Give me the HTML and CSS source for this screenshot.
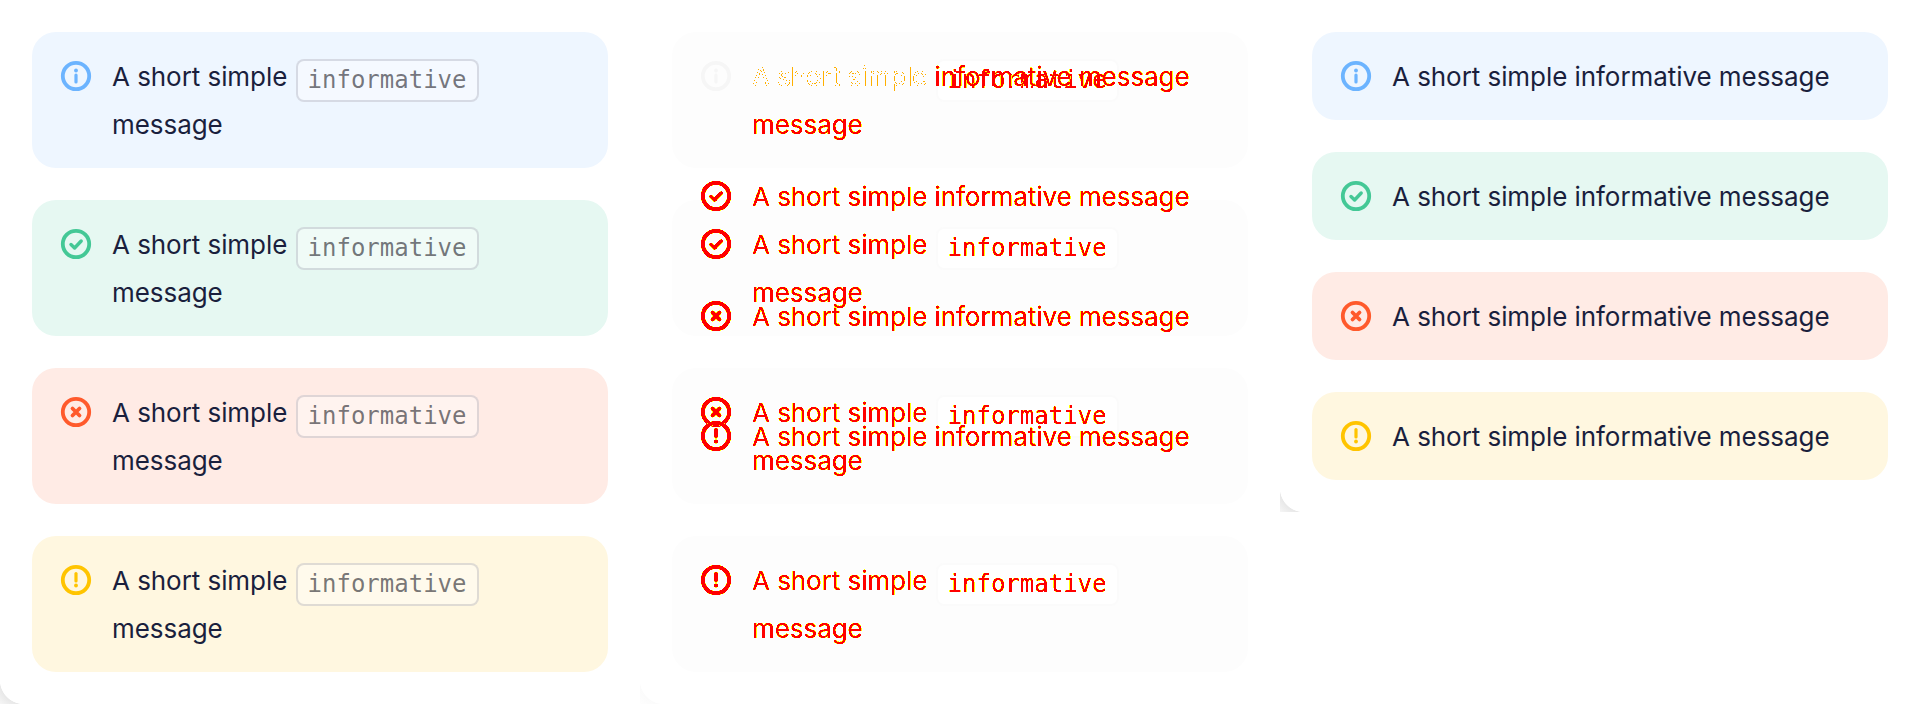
FILE: index.html
```html
<!DOCTYPE html>
<html lang="en">
<head>
  <meta charset="UTF-8">
  <title>Alert messages</title>
  <link rel="stylesheet" href="styles.css">
</head>
<body>
  <svg class="sprites" width="0" height="0">
    <symbol id="i-info" viewBox="0 0 32 32"><circle cx="16" cy="16" r="13.2" fill="none" stroke="currentColor" stroke-width="3.8"/><circle cx="16" cy="10.5" r="1.9" fill="currentColor"/><path d="M16 15v7" fill="none" stroke="currentColor" stroke-width="3.2" stroke-linecap="round"/></symbol>
    <symbol id="i-check" viewBox="0 0 32 32"><circle cx="16" cy="16" r="13.2" fill="none" stroke="currentColor" stroke-width="3.8"/><path d="M11 16.5l3.6 3.5 6.6-7" fill="none" stroke="currentColor" stroke-width="3.4" stroke-linecap="round" stroke-linejoin="round"/></symbol>
    <symbol id="i-error" viewBox="0 0 32 32"><circle cx="16" cy="16" r="13.2" fill="none" stroke="currentColor" stroke-width="3.8"/><path d="M12.5 12.5l7 7M19.5 12.5l-7 7" fill="none" stroke="currentColor" stroke-width="3.8" stroke-linecap="round"/></symbol>
    <symbol id="i-warn" viewBox="0 0 32 32"><circle cx="16" cy="16" r="13.2" fill="none" stroke="currentColor" stroke-width="3.8"/><path d="M16 9.5v7.5" fill="none" stroke="currentColor" stroke-width="3.2" stroke-linecap="round"/><circle cx="16" cy="21.5" r="1.9" fill="currentColor"/></symbol>

    <!-- hard edged red with a yellow fringe, like a pixel diff -->
    <filter id="px" color-interpolation-filters="sRGB">
      <feComponentTransfer in="SourceAlpha" result="outer"><feFuncA type="discrete" tableValues="0 1 1 1 1 1 1"/></feComponentTransfer>
      <feFlood flood-color="#ff0"/>
      <feComposite in2="outer" operator="in" result="fringe"/>
      <feComponentTransfer in="SourceAlpha" result="inner"><feFuncA type="discrete" tableValues="0 0 1 1"/></feComponentTransfer>
      <feFlood flood-color="#f00"/>
      <feComposite in2="inner" operator="in" result="core"/>
      <feMerge><feMergeNode in="fringe"/><feMergeNode in="core"/></feMerge>
    </filter>
    <!-- only the fringe, where the two layers nearly agree -->
    <filter id="px-edge" color-interpolation-filters="sRGB">
      <feComponentTransfer in="SourceAlpha" result="edge"><feFuncA type="discrete" tableValues="0 1 1 0 0"/></feComponentTransfer>
      <feFlood flood-color="#ffb000"/>
      <feComposite in2="edge" operator="in"/>
    </filter>
  </svg>

  <main class="page">
    <section class="panel">
      <div class="alert info"><svg class="icon"><use href="#i-info"/></svg><p>A short simple <code>informative</code> message</p></div>
      <div class="alert success"><svg class="icon"><use href="#i-check"/></svg><p>A short simple <code>informative</code> message</p></div>
      <div class="alert error"><svg class="icon"><use href="#i-error"/></svg><p>A short simple <code>informative</code> message</p></div>
      <div class="alert warning"><svg class="icon"><use href="#i-warn"/></svg><p>A short simple <code>informative</code> message</p></div>
      <span class="corner"></span>
    </section>

    <!-- middle column: the other two laid over each other -->
    <section class="panel diff">
      <div class="alert ghost"><svg class="icon pale"><use href="#i-info"/></svg><p><span class="faint">A short simple</span> <code><span class="px">informative</span></code> <span class="px">message</span></p></div>
      <div class="alert ghost"><svg class="icon px"><use href="#i-check"/></svg><p><span class="px">A short simple</span> <code><span class="px">informative</span></code> <span class="px">message</span></p></div>
      <div class="alert ghost"><svg class="icon px"><use href="#i-error"/></svg><p><span class="px">A short simple</span> <code><span class="px">informative</span></code> <span class="px">message</span></p></div>
      <div class="alert ghost"><svg class="icon px"><use href="#i-warn"/></svg><p><span class="px">A short simple</span> <code><span class="px">informative</span></code> <span class="px">message</span></p></div>
      <div class="overlay">
        <div class="alert plain"><svg class="icon hidden"><use href="#i-info"/></svg><p><span class="faint">A short simple</span> <span class="px">informative message</span></p></div>
        <div class="alert plain"><svg class="icon px"><use href="#i-check"/></svg><p><span class="px">A short simple informative message</span></p></div>
        <div class="alert plain"><svg class="icon px"><use href="#i-error"/></svg><p><span class="px">A short simple informative message</span></p></div>
        <div class="alert plain"><svg class="icon px"><use href="#i-warn"/></svg><p><span class="px">A short simple informative message</span></p></div>
      </div>
      <span class="corner soft"></span>
    </section>

    <section class="panel short">
      <div class="alert info"><svg class="icon"><use href="#i-info"/></svg><p>A short simple informative message</p></div>
      <div class="alert success"><svg class="icon"><use href="#i-check"/></svg><p>A short simple informative message</p></div>
      <div class="alert error"><svg class="icon"><use href="#i-error"/></svg><p>A short simple informative message</p></div>
      <div class="alert warning"><svg class="icon"><use href="#i-warn"/></svg><p>A short simple informative message</p></div>
      <span class="corner"></span>
    </section>
  </main>
</body>
</html>
```

FILE: styles.css
```css
* { box-sizing: border-box; }
html, body { margin: 0; height: 100%; background: #fff; }
body { font-family: Inter, "Noto Sans", sans-serif; color: #1a1f3d; overflow: hidden; }
.sprites { position: absolute; }

.page { display: grid; grid-template-columns: repeat(3, 640px); align-items: start; }
.panel { position: relative; height: 704px; padding: 32px; display: flex; flex-direction: column; gap: 32px; }
.panel.short { height: 512px; }

.alert { display: flex; gap: 20px; padding: 20px 28px; border-radius: 24px; }
.alert p { margin: 0 0 -1px; padding-top: 1px; font-size: 26px; line-height: 48px; letter-spacing: -0.06px; }
.icon { flex: none; width: 32px; height: 32px; margin-top: 8px; }

.info { background: #eef6ff; }
.info .icon { color: #6cb4ff; }
.success { background: #e6f8f2; }
.success .icon { color: #44c896; }
.error { background: #ffebe5; }
.error .icon { color: #ff5a2c; }
.warning { background: #fff7e0; }
.warning .icon { color: #ffc400; }

code {
  display: inline-block;
  margin: -6px 0 -6px 1px;
  padding: 0 10px;
  font-family: "DejaVu Sans Mono", monospace;
  font-size: 24px;
  line-height: 39px;
  letter-spacing: 0;
  color: rgba(30, 30, 40, 0.62);
  background: rgba(255, 255, 255, 0.4);
  border: 2px solid rgba(26, 31, 61, 0.14);
  border-radius: 8px;
  vertical-align: -2px;
}

/* diff look */
.diff { color: #f00; }
.px { filter: url(#px); }
.icon.pale { color: #f6f6f6; }
.icon.hidden { visibility: hidden; }
.ghost { background: #fdfdfd; }
.ghost code { color: #f00; background: #fff; border-color: #fbfbfb; }
.faint { filter: url(#px-edge); }
.overlay { position: absolute; inset: 0; padding: 32px; display: flex; flex-direction: column; gap: 32px; }
.plain { background: none; }

/* little grey wedge outside the rounded bottom-left corner */
.corner {
  position: absolute;
  left: 0;
  bottom: 0;
  width: 24px;
  height: 24px;
  background: radial-gradient(circle 34px at 100% 0, #fff 70%, #e8e8e8 72%, #f6f6f6 100%);
}
.corner.soft { background: radial-gradient(circle 34px at 100% 0, #fff 70%, #fbfbfb 72%, #fefefe 100%); }
```
